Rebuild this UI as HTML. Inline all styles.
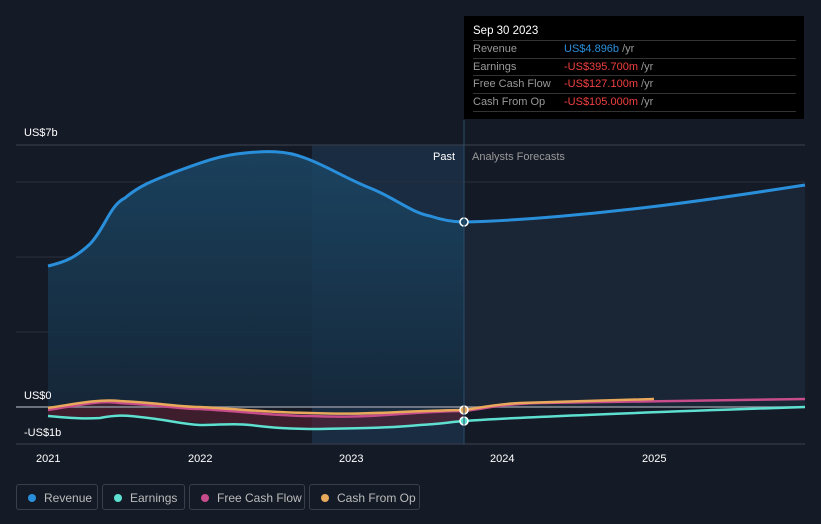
<!DOCTYPE html>
<html><head><style>
body{margin:0;background:#151b26;font-family:"Liberation Sans",sans-serif;width:821px;height:524px;overflow:hidden;position:relative}
.tt{position:absolute;left:464px;top:16px;width:340px;height:103px;background:#000;color:#fff;font-size:11px}
.tt .h{position:absolute;left:9px;top:9px;font-size:11.5px}
.row{position:absolute;left:9px;width:323px;height:17px;border-top:1px solid #333;color:#999;line-height:17px}
.row span{position:absolute;left:91px}
.lg{position:absolute;top:484px;height:26px;border:1px solid #3a404b;border-radius:3px;color:#bbb;font-size:12px;line-height:26px;box-sizing:border-box}
.lg i{position:absolute;left:11px;top:9px;width:8px;height:8px;border-radius:50%}
.lg b{font-weight:normal;position:absolute;left:27px}
</style></head><body>
<svg width="821" height="524" style="position:absolute;left:0;top:0">
<defs><linearGradient id="g" x1="0" y1="0" x2="0" y2="1"><stop offset="0" stop-color="#1b4766"/><stop offset="1" stop-color="#15283a"/></linearGradient></defs>
<rect x="312" y="145" width="152" height="299" fill="#1a3148" opacity="0.8"/>
<line x1="16" y1="145" x2="805" y2="145" stroke="#3a414d"/>
<line x1="16" y1="182" x2="805" y2="182" stroke="#2a313c"/>
<line x1="16" y1="257" x2="805" y2="257" stroke="#2a313c"/>
<line x1="16" y1="332" x2="805" y2="332" stroke="#2a313c"/>
<path d="M48,266 C65,262 75,258 90,244 C105,228 110,205 125,198 C140,185 155,180 175,172 C200,163 220,155 245,153 C265,151 285,150 305,158 C325,165 345,178 370,188 C395,198 410,212 430,216 C445,221 455,222 464,222 L464,407 L48,407 Z" fill="url(#g)" opacity="0.85"/>
<path d="M464,222 C520,221 600,213 650,207 C700,201 760,192 805,185 L805,407 L464,407Z" fill="#1a2535"/>
<path d="M48,266 C65,262 75,258 90,244 C105,228 110,205 125,198 C140,185 155,180 175,172 C200,163 220,155 245,153 C265,151 285,150 305,158 C325,165 345,178 370,188 C395,198 410,212 430,216 C445,221 455,222 464,222 C520,221 600,213 650,207 C700,201 760,192 805,185" fill="none" stroke="#2a8fdb" stroke-width="3"/>
<path d="M48,410 C80,405 100,400 120,403 C160,405 180,409 200,409 C250,412 280,416 310,416 C340,417 360,417 400,414 C430,412 450,411 464,411 L464,421 C440,425 420,427 360,428 C320,429 280,429 240,424 C200,425 160,418 120,416 C90,417 70,418 48,416Z" fill="#5a2030" opacity="0.6"/>
<line x1="16" y1="407" x2="805" y2="407" stroke="#8a8f99" stroke-width="1.5"/>
<line x1="16" y1="444" x2="805" y2="444" stroke="#3a414d"/>
<path d="M48,416 C70,418 85,419 100,418 C115,415 125,415 140,417 C170,420 180,424 200,425 C220,425 235,423 250,425 C275,428 290,429 320,429 C360,428 390,428 420,425 C440,424 450,422 464,421 C520,417 654,412 805,407" fill="none" stroke="#5ee0d0" stroke-width="2.5"/>
<path d="M48,410 C80,405 100,400 120,403 C160,405 180,409 200,409 C250,412 280,416 310,416 C340,417 360,417 400,414 C430,412 450,411 464,411 C490,408 500,404 540,403 C650,401 760,400 805,399" fill="none" stroke="#c74c8c" stroke-width="2.5"/>
<path d="M48,408 C80,403 100,399 120,401 C160,403 180,407 200,407 C250,410 280,413 310,413 C340,414 360,414 400,412 C430,411 450,410 464,410 C480,408 495,404 520,403 C580,401 620,400 654,399" fill="none" stroke="#e8a95c" stroke-width="2.5"/>
<circle cx="464" cy="222" r="4" fill="#1b4766" stroke="#fff" stroke-width="1.5"/>
<circle cx="464" cy="421" r="4" fill="#5ee0d0" stroke="#fff" stroke-width="1.5"/>
<circle cx="464" cy="410" r="4" fill="#e8a95c" stroke="#fff" stroke-width="1.5"/>
<line x1="464" y1="120" x2="464" y2="444" stroke="#2a4c6a"/>
<g fill="#fff" font-size="11" font-family="Liberation Sans"><text x="24" y="136">US$7b</text><text x="24" y="399">US$0</text><text x="24" y="436">-US$1b</text>
<text x="36" y="462">2021</text><text x="188" y="462">2022</text><text x="339" y="462">2023</text><text x="490" y="462">2024</text><text x="642" y="462">2025</text>
<text x="433" y="160">Past</text><text x="472" y="160" fill="#999">Analysts Forecasts</text></g>
</svg>
<div class="tt"><div class="h">Sep 30 2023</div>
<div class="row" style="top:24px">Revenue<span><em style="color:#2a8fdb;font-style:normal">US$4.896b</em> /yr</span></div>
<div class="row" style="top:42px">Earnings<span><em style="color:#f04040;font-style:normal">-US$395.700m</em> /yr</span></div>
<div class="row" style="top:59px">Free Cash Flow<span><em style="color:#f04040;font-style:normal">-US$127.100m</em> /yr</span></div>
<div class="row" style="top:77px;border-bottom:1px solid #333">Cash From Op<span><em style="color:#f04040;font-style:normal">-US$105.000m</em> /yr</span></div>
</div>
<div class="lg" style="left:16px;width:82px"><i style="background:#2a8fdb"></i><b>Revenue</b></div>
<div class="lg" style="left:102px;width:83px"><i style="background:#5ee0d0"></i><b>Earnings</b></div>
<div class="lg" style="left:189px;width:116px"><i style="background:#c74c8c"></i><b>Free Cash Flow</b></div>
<div class="lg" style="left:309px;width:111px"><i style="background:#e8a95c"></i><b>Cash From Op</b></div>
</body></html>
